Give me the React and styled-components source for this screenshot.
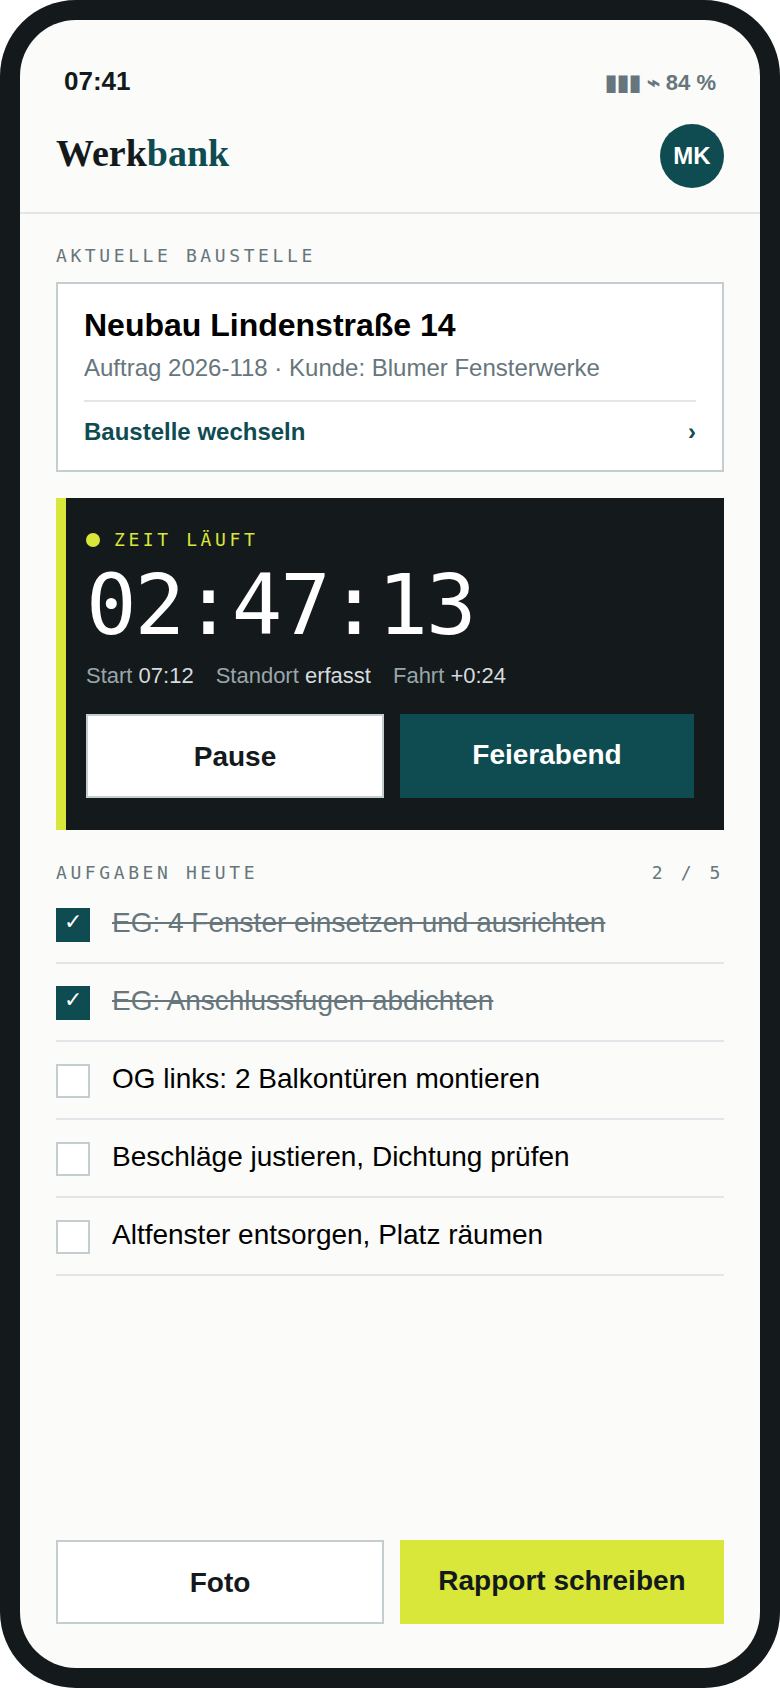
import styled, { createGlobalStyle } from "styled-components";

const tasks = [
  { text: "EG: 4 Fenster einsetzen und ausrichten", done: true },
  { text: "EG: Anschlussfugen abdichten", done: true },
  { text: "OG links: 2 Balkontüren montieren", done: false },
  { text: "Beschläge justieren, Dichtung prüfen", done: false },
  { text: "Altfenster entsorgen, Platz räumen", done: false },
];

function App() {
  return (
    <>
      <GlobalStyle />
      <Phone>
        <Screen>
          <StatusBar>
            <Clock>07:41</Clock>
            <Battery>▮▮▮ ⌁ 84 %</Battery>
          </StatusBar>
          <Header>
            <Logo>
              Werk<span>bank</span>
            </Logo>
            <Avatar>MK</Avatar>
          </Header>
          <Main>
            <Label>AKTUELLE BAUSTELLE</Label>
            <SiteCard>
              <SiteTitle>Neubau Lindenstraße 14</SiteTitle>
              <SiteInfo>Auftrag 2026-118 · Kunde: Blumer Fensterwerke</SiteInfo>
              <SiteLink>
                <span>Baustelle wechseln</span>
                <span>›</span>
              </SiteLink>
            </SiteCard>
            <Timer>
              <TimerState>
                <Dot />
                ZEIT LÄUFT
              </TimerState>
              <TimerValue>02:47:13</TimerValue>
              <TimerMeta>
                <span>
                  Start <b>07:12</b>
                </span>
                <span>
                  Standort <b>erfasst</b>
                </span>
                <span>
                  Fahrt <b>+0:24</b>
                </span>
              </TimerMeta>
              <TimerActions>
                <Button>Pause</Button>
                <Button $variant="teal">Feierabend</Button>
              </TimerActions>
            </Timer>
            <TasksHead>
              <Label>AUFGABEN HEUTE</Label>
              <Label>2 / 5</Label>
            </TasksHead>
            <TaskList>
              {tasks.map((task) => (
                <Task key={task.text}>
                  <Check $done={task.done}>{task.done ? "✓" : ""}</Check>
                  <TaskText $done={task.done}>{task.text}</TaskText>
                </Task>
              ))}
            </TaskList>
          </Main>
          <Footer>
            <Button>Foto</Button>
            <Button $variant="lime">Rapport schreiben</Button>
          </Footer>
        </Screen>
      </Phone>
    </>
  );
}

export default App;

const GlobalStyle = createGlobalStyle`
  * {
    box-sizing: border-box;
  }
  html, body {
    margin: 0;
    background: #fff;
    font-family: "Liberation Sans", Arial, sans-serif;
  }
`;

const Phone = styled.div`
  width: 780px;
  height: 1688px;
  padding: 20px;
  background: #14191c;
  border-radius: 76px;
`;

const Screen = styled.div`
  height: 100%;
  display: flex;
  flex-direction: column;
  background: #fbfbf9;
  border-radius: 56px;
  overflow: hidden;
`;

const StatusBar = styled.div`
  display: flex;
  justify-content: space-between;
  align-items: center;
  height: 36px;
  margin-top: 43px;
  padding: 0 44px;
`;

const Clock = styled.span`
  font-size: 26px;
  font-weight: 700;
  color: #14191c;
`;

const Battery = styled.span`
  margin-top: 4px;
  font-size: 22px;
  font-weight: 700;
  color: #66767c;
`;

const Header = styled.header`
  display: flex;
  justify-content: space-between;
  align-items: center;
  margin-top: 25px;
  padding: 0 36px 24px;
  border-bottom: 2px solid #e2e6e8;
`;

const Logo = styled.div`
  margin-top: -6px;
  font-family: "Liberation Serif", "Times New Roman", serif;
  font-size: 38px;
  font-weight: 700;
  color: #14191c;

  span {
    color: #0f4c52;
  }
`;

const Avatar = styled.div`
  width: 64px;
  height: 64px;
  display: flex;
  align-items: center;
  justify-content: center;
  border-radius: 50%;
  background: #0f4c52;
  color: #fff;
  font-size: 24px;
  font-weight: 700;
`;

const Main = styled.main`
  flex: 1;
  padding: 32px 36px 0;
`;

const Label = styled.div`
  font-family: "DejaVu Sans Mono", monospace;
  font-size: 18px;
  line-height: 20px;
  letter-spacing: 3.6px;
  color: #66767c;
`;

const SiteCard = styled.section`
  margin-top: 16px;
  padding: 22px 26px 0;
  height: 190px;
  background: #fff;
  border: 2px solid #c4ced1;
`;

const SiteTitle = styled.h2`
  margin: 0;
  font-size: 32px;
  line-height: 38px;
  font-weight: 700;
  color: #000;
`;

const SiteInfo = styled.div`
  margin-top: 8px;
  font-size: 24px;
  line-height: 32px;
  color: #66767c;
`;

const SiteLink = styled.div`
  display: flex;
  justify-content: space-between;
  margin-top: 16px;
  padding-top: 15px;
  border-top: 2px solid #e2e6e8;
  font-size: 24px;
  line-height: 30px;
  font-weight: 700;
  color: #0f4c52;
`;

const Timer = styled.section`
  margin-top: 26px;
  height: 332px;
  padding: 32px 30px 0 20px;
  background: #14191c;
  border-left: 10px solid #d9e63a;
`;

const TimerState = styled.div`
  display: flex;
  align-items: center;
  gap: 14px;
  font-family: "DejaVu Sans Mono", monospace;
  font-size: 18px;
  line-height: 20px;
  letter-spacing: 3.6px;
  color: #d9e63a;
`;

const Dot = styled.i`
  width: 14px;
  height: 14px;
  border-radius: 50%;
  background: #d9e63a;
`;

const TimerValue = styled.div`
  margin-top: 9px;
  font-family: "DejaVu Sans Mono", monospace;
  font-size: 84px;
  line-height: 92px;
  letter-spacing: -2px;
  color: #fff;
`;

const TimerMeta = styled.div`
  display: flex;
  gap: 22px;
  margin-top: 11px;
  font-size: 22px;
  line-height: 28px;
  color: #98a6ab;

  b {
    font-weight: 400;
    color: #d5dbde;
  }
`;

const TimerActions = styled.div`
  display: grid;
  grid-template-columns: 298px 1fr;
  gap: 16px;
  margin-top: 24px;
`;

const variants = {
  white: "background: #fff; color: #14191c; border: 2px solid #c4ced1;",
  teal: "background: #0f4c52; color: #fff;",
  lime: "background: #d9e63a; color: #14191c;",
};

const Button = styled.div`
  height: 84px;
  padding-top: 25px;
  text-align: center;
  font-size: 28px;
  line-height: 32px;
  font-weight: 700;
  ${(p) => variants[p.$variant || "white"]}
`;

const TasksHead = styled.div`
  display: flex;
  justify-content: space-between;
  margin-top: 33px;
`;

const TaskList = styled.div`
  display: flex;
  flex-direction: column;
  margin-top: 3px;
`;

const Task = styled.div`
  display: flex;
  align-items: flex-start;
  gap: 22px;
  height: 78px;
  padding-top: 22px;
  border-bottom: 2px solid #e2e6e8;
`;

const Check = styled.span`
  flex: none;
  width: 34px;
  height: 34px;
  display: flex;
  justify-content: center;
  background: ${(p) => (p.$done ? "#0f4c52" : "#fff")};
  border: 2px solid ${(p) => (p.$done ? "#0f4c52" : "#c4ced1")};
  color: #fff;
  font-size: 22px;
  line-height: 24px;
`;

const TaskText = styled.span`
  margin-top: -1px;
  font-size: 28px;
  line-height: 32px;
  color: ${(p) => (p.$done ? "#66767c" : "#000")};
  text-decoration: ${(p) => (p.$done ? "line-through" : "none")};
`;

const Footer = styled.footer`
  display: grid;
  grid-template-columns: 328px 1fr;
  gap: 16px;
  padding: 0 36px 44px;
`;
